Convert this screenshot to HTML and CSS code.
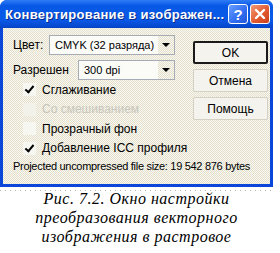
FILE: index.html
```html
<!DOCTYPE html>
<html lang="ru">

<head>
    <meta charset="UTF-8">
    <title>Конвертирование в изображение</title>
    <link rel="stylesheet" href="styles.css">
</head>

<body>
    <div class="window">
        <div class="titlebar">
            <span class="title">Конвертирование в изображен...</span>
            <div class="tb-btns">
                <span class="tb-btn help">?</span>
                <span class="tb-btn close">
                    <svg width="12" height="12" viewBox="0 0 12 12">
                        <path d="M2 2 L10 10 M10 2 L2 10" stroke="#fff" stroke-width="2.4" stroke-linecap="round"/>
                    </svg>
                </span>
            </div>
        </div>
        <div class="body">
            <div class="top">
                <div class="fields">
                    <div class="row">
                        <span class="lbl">Цвет:</span>
                        <div class="select color">CMYK (32 разряда)<span class="arrow"></span></div>
                    </div>
                    <div class="row">
                        <span class="lbl">Разрешен</span>
                        <div class="select res">300 dpi<span class="arrow"></span></div>
                    </div>
                    <div class="check"><span class="box checked"></span>Сглаживание</div>
                    <div class="check disabled"><span class="box"></span>Со смешиванием</div>
                    <div class="check"><span class="box"></span>Прозрачный фон</div>
                    <div class="check"><span class="box checked"></span>Добавление ICC профиля</div>
                </div>
                <div class="buttons">
                    <div class="btn default">OK</div>
                    <div class="btn">Отмена</div>
                    <div class="btn">Помощь</div>
                </div>
            </div>
            <div class="size">Projected uncompressed file size: 19 542 876 bytes</div>
        </div>
    </div>
    <div class="dotline"></div>
    <p class="caption">Рис. 7.2. Окно настройки<br>преобразования векторного<br>изображения в растровое</p>
</body>

</html>
```

FILE: styles.css
```css
body {
    margin: 0;
    background-color: #ffffff;
    font-family: "Liberation Sans", Arial, sans-serif;
    width: 280px;
}

.window {
    width: 273px;
    box-sizing: border-box;
    background-color: #0a46d8;
    border-radius: 7px 7px 0 0;
    padding: 0 3px 3px 3px;
}

.titlebar {
    height: 28px;
    display: flex;
    align-items: center;
    justify-content: space-between;
    padding: 0 3px 0 5px;
    background: linear-gradient(#2f7cf6, #0858e6 20%, #0a5ae8 70%, #0544c8);
    margin: 0 -3px;
    border-radius: 7px 7px 0 0;
}

.title {
    color: #ffffff;
    font-weight: bold;
    font-size: 13px;
    letter-spacing: 0.3px;
    text-shadow: 1px 1px 0 #0a2c8a;
    white-space: nowrap;
}

.tb-btns {
    display: flex;
    gap: 2px;
}

.tb-btn {
    width: 20px;
    height: 20px;
    box-sizing: border-box;
    border: 1px solid #ffffff;
    border-radius: 3px;
    display: flex;
    align-items: center;
    justify-content: center;
    color: #ffffff;
    font-weight: bold;
    font-size: 15px;
}

.help {
    background: linear-gradient(135deg, #6aa0ff, #2f6cf0 60%, #2458d8);
}

.close {
    background: linear-gradient(135deg, #f09a78, #e0562c 60%, #c8401c);
}

.body {
    background: repeating-conic-gradient(#e4e0cc 0 25%, #f8f7f1 0 50%) 0 0 / 2px 2px;
    padding: 7px 2px 11px 10px;
    font-size: 12px;
    color: #000000;
    white-space: nowrap;
}

.top {
    display: flex;
    justify-content: space-between;
}

.fields {
    width: 162px;
}

.row {
    display: flex;
    align-items: center;
    justify-content: space-between;
    height: 20px;
    margin-bottom: 5px;
}

.row:nth-child(2) {
    margin-bottom: 0;
}

.select {
    height: 20px;
    box-sizing: border-box;
    border: 1px solid #a5acb5;
    background-color: #fbfbf8;
    display: flex;
    align-items: center;
    justify-content: space-between;
    padding-left: 5px;
    font-size: 11px;
}

.color {
    width: 126px;
}

.res {
    width: 97px;
}

.arrow {
    width: 16px;
    height: 18px;
    background: repeating-conic-gradient(#e4e0cc 0 25%, #f8f7f1 0 50%) 0 0 / 2px 2px;
    display: flex;
    align-items: center;
    justify-content: center;
}

.arrow::after {
    content: "";
    border-left: 4px solid transparent;
    border-right: 4px solid transparent;
    border-top: 4px solid #000000;
}

.check {
    display: flex;
    align-items: center;
    height: 19.5px;
    padding-left: 10px;
}

.box {
    flex-shrink: 0;
    width: 13px;
    height: 13px;
    box-sizing: border-box;
    background-color: #f7f7f2;
    margin-right: 6px;
    position: relative;
}

.box.checked::after {
    content: "";
    position: absolute;
    left: 4px;
    top: 1px;
    width: 3px;
    height: 7px;
    border-right: 2px solid #000000;
    border-bottom: 2px solid #000000;
    transform: rotate(40deg);
}

.disabled {
    color: #c8c6bc;
}

.disabled .box {
    background-color: #f3f2ea;
}

.buttons {
    display: flex;
    flex-direction: column;
    gap: 5px;
    width: 75px;
    padding-top: 6px;
}

.btn {
    height: 23px;
    box-sizing: border-box;
    border: 1px solid #d4d0c4;
    border-radius: 2px;
    background-color: #f4f3ee;
    display: flex;
    align-items: center;
    justify-content: center;
}

.btn.default {
    border: 2px solid #1a1a1a;
}

.size {
    margin-top: 1px;
    height: 14px;
    line-height: 14px;
    font-size: 11px;
    letter-spacing: -0.3px;
}

.dotline {
    width: 273px;
    height: 1px;
    margin-top: 3px;
    background: repeating-linear-gradient(90deg, #b0b0b0 0 1px, transparent 1px 5px);
}

.caption {
    margin: -2px 0 0 0;
    width: 273px;
    text-align: center;
    font-family: "Liberation Serif", "Times New Roman", serif;
    font-style: italic;
    font-size: 16px;
    letter-spacing: 0.5px;
    line-height: 19px;
}
```
